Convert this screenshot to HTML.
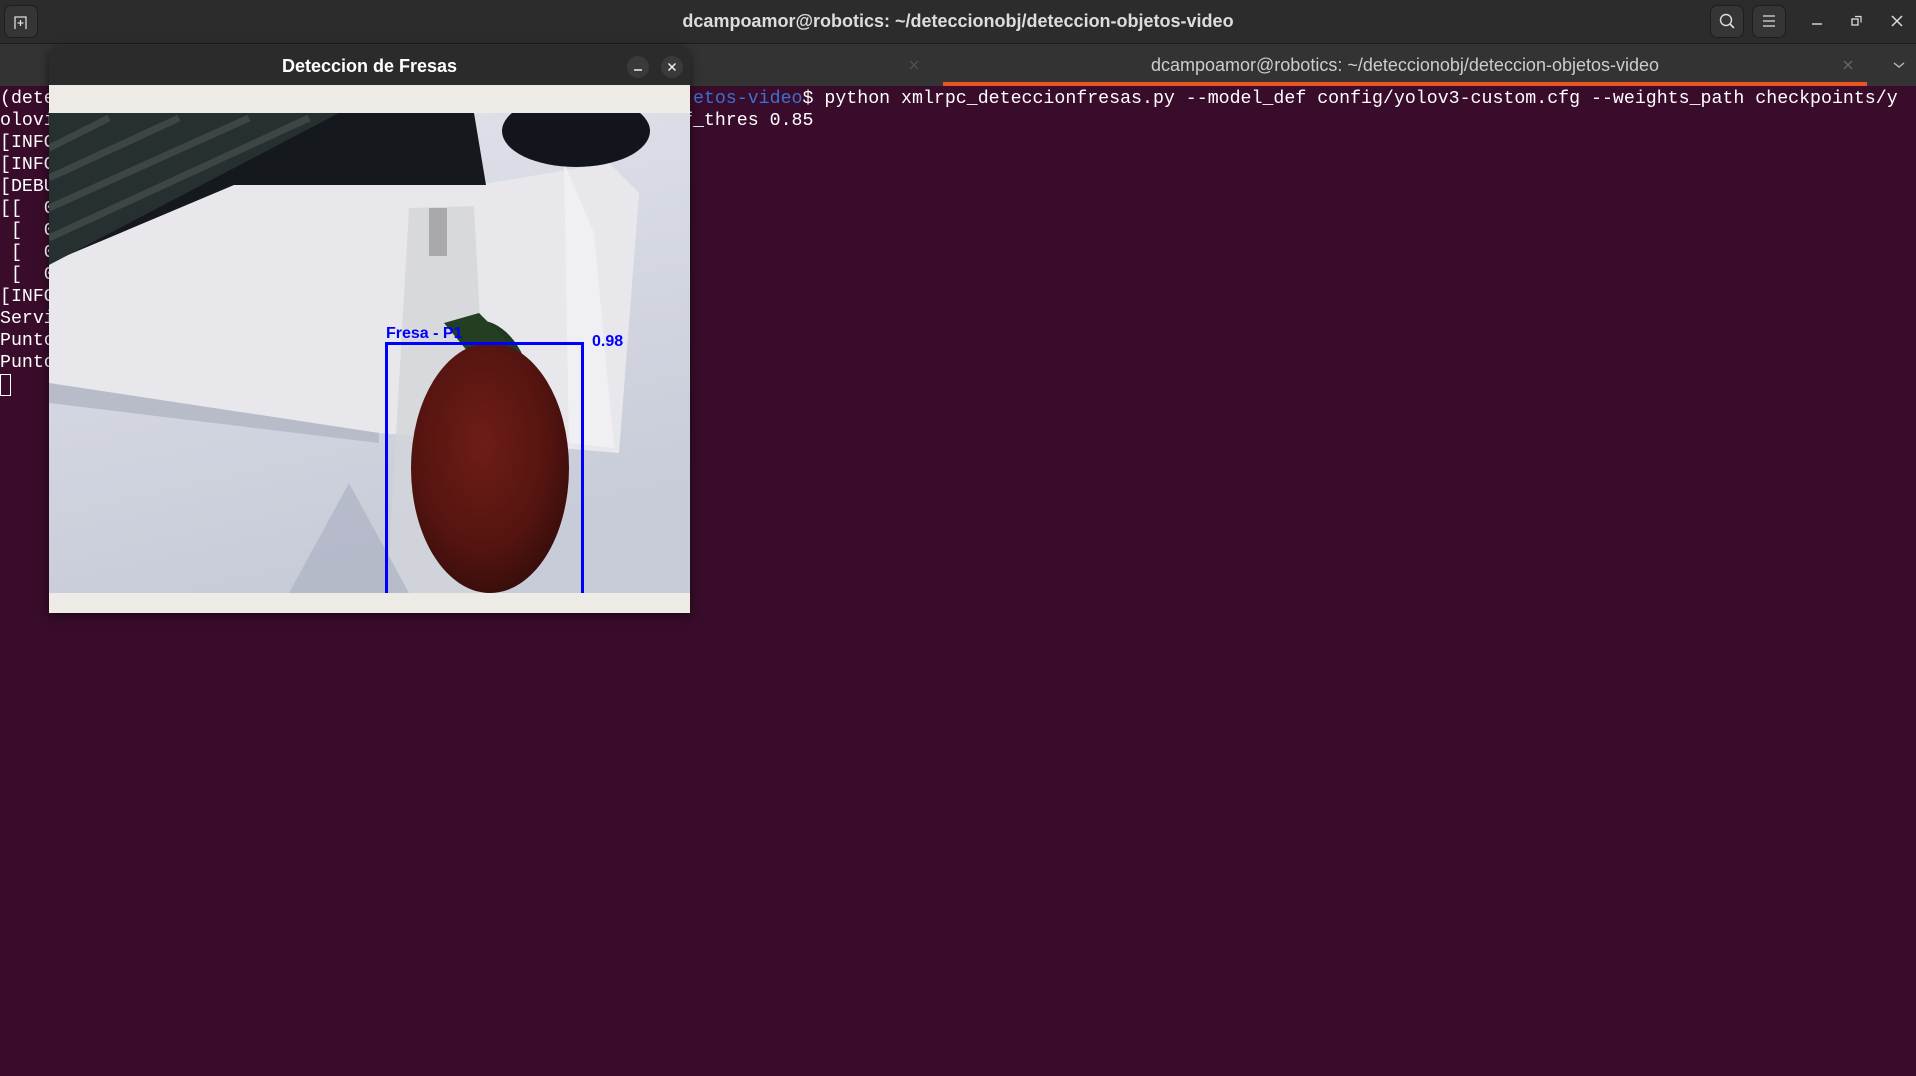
<!DOCTYPE html>
<html><head><meta charset="utf-8"><style>
*{margin:0;padding:0;box-sizing:border-box}
body{width:1916px;height:1076px;overflow:hidden;background:#380c2a;position:relative;font-family:"Liberation Sans",sans-serif}
.hdr{position:absolute;left:0;top:0;width:1916px;height:44px;background:#2c2c2c;border-bottom:1px solid #1c1c1c}
.tabs{position:absolute;left:0;top:44px;width:1916px;height:42px;background:#333}
.orange{position:absolute;left:943px;top:82px;width:924px;height:4px;background:#e95420}
.btn{position:absolute;border:1px solid #1e1e1e;background:#353535;border-radius:7px}
.term{position:absolute;left:0;top:88px;font-family:"Liberation Mono",monospace;font-size:18.25px;line-height:22px;color:#fff;white-space:pre;overflow:hidden;width:1916px;height:320px}
.pop{position:absolute;left:49px;top:47px;width:641px;height:566px;background:#2b2b2b;border-radius:10px 10px 0 0;overflow:hidden;box-shadow:0 2px 10px rgba(0,0,0,.5)}
</style></head><body>
<div class="hdr">
 <div class="btn" style="left:4px;top:5px;width:34px;height:33px"></div>
 <svg style="position:absolute;left:13px;top:14px" width="16" height="16"><path d="M2 15V3h11v12M7.5 6v6M4.5 9h6" stroke="#ddd" stroke-width="1.3" fill="none"/></svg>
 <div style="position:absolute;left:0;width:1916px;top:11px;text-align:center;color:#ddd;font-weight:bold;font-size:18px">dcampoamor@robotics: ~/deteccionobj/deteccion-objetos-video</div>
 <div class="btn" style="left:1710px;top:5px;width:34px;height:33px"></div>
 <svg style="position:absolute;left:1718px;top:12px" width="18" height="18"><circle cx="8" cy="8" r="5.5" stroke="#ddd" stroke-width="1.4" fill="none"/><path d="M12 12l4 4" stroke="#ddd" stroke-width="1.6"/></svg>
 <div class="btn" style="left:1752px;top:5px;width:34px;height:33px"></div>
 <svg style="position:absolute;left:1761px;top:13px" width="16" height="16"><path d="M2 3h12M2 8h12M2 13h12" stroke="#ddd" stroke-width="1.3"/></svg>
 <svg style="position:absolute;left:1811px;top:16px" width="14" height="12"><path d="M1 8h10" stroke="#ddd" stroke-width="1.4"/></svg>
 <svg style="position:absolute;left:1850px;top:14px" width="14" height="14"><rect x="2" y="5" width="6" height="6" stroke="#ddd" fill="none" stroke-width="1.3"/><path d="M5 2.5h6v6" stroke="#ddd" fill="none" stroke-width="1.2"/></svg>
 <svg style="position:absolute;left:1890px;top:14px" width="14" height="14"><path d="M2 2l10 10M12 2L2 12" stroke="#ddd" stroke-width="1.5"/></svg>
</div>
<div class="tabs">
 <svg style="position:absolute;left:908px;top:15px" width="12" height="12"><path d="M2 2l8 8M10 2L2 10" stroke="#555" stroke-width="1.2"/></svg>
 <div style="position:absolute;left:943px;width:924px;top:11px;text-align:center;color:#ccc;font-size:18px">dcampoamor@robotics: ~/deteccionobj/deteccion-objetos-video</div>
 <svg style="position:absolute;left:1842px;top:15px" width="12" height="12"><path d="M2 2l8 8M10 2L2 10" stroke="#666" stroke-width="1.3"/></svg>
 <svg style="position:absolute;left:1892px;top:16px" width="14" height="10"><path d="M2 3l5 4 5-4" stroke="#bbb" stroke-width="1.4" fill="none"/></svg>
</div>
<div class="orange"></div>
<div class="term">(deteccion-objetos-video) dcampoamor@robotics:~/deteccionobj/<span style="color:#3f6fd0">deteccion-objetos-video</span>$ python xmlrpc_deteccionfresas.py --model_def config/yolov3-custom.cfg --weights_path checkpoints/y
olovi3_ckpt_99.pth --class_path data/custom/classes.names --conf_thres 0.85
[INFO] Cargando modelo
[INFO] Modelo cargado
[DEBUG] Matriz
[[  0
 [  0
 [  0
 [  0
[INFO] Iniciando
Servidor
Punto
Punto
<span style="display:inline-block;width:11px;height:22px;border:1.5px solid #fff;vertical-align:top"></span></div>
<div class="term" style="left:682px;width:1234px;height:44px;background:#380c2a"> <span style="color:#3f6fd0">etos-video</span>$ python xmlrpc_deteccionfresas.py --model_def config/yolov3-custom.cfg --weights_path checkpoints/y
f_thres 0.85</div>
<div class="pop">
 <div style="position:absolute;left:0;width:641px;top:9px;text-align:center;color:#fff;font-weight:bold;font-size:18px">Deteccion de Fresas</div>
 <div style="position:absolute;left:578px;top:9px;width:22px;height:22px;border-radius:50%;background:#3a3a3a"></div>
 <svg style="position:absolute;left:583px;top:14px" width="12" height="12"><path d="M2 9h8" stroke="#eee" stroke-width="1.4"/></svg>
 <div style="position:absolute;left:612px;top:9px;width:22px;height:22px;border-radius:50%;background:#3a3a3a"></div>
 <svg style="position:absolute;left:617px;top:14px" width="12" height="12"><path d="M2.5 2.5l7 7M9.5 2.5l-7 7" stroke="#eee" stroke-width="1.5"/></svg>
 <div style="position:absolute;left:0;top:38px;width:641px;height:28px;background:#eeebe6"></div>
 <svg style="position:absolute;left:0;top:66px" width="641" height="480" viewBox="0 0 641 480">
  <defs>
   <linearGradient id="bg" x1="0" y1="0" x2="0.3" y2="1"><stop offset="0" stop-color="#e2e4ec"/><stop offset="1" stop-color="#c8ccd8"/></linearGradient>
   <radialGradient id="sb" cx="0.45" cy="0.4" r="0.6"><stop offset="0" stop-color="#6e1d16"/><stop offset="0.7" stop-color="#551410"/><stop offset="1" stop-color="#3a0e0c"/></radialGradient>
  </defs>
  <rect width="641" height="480" fill="url(#bg)"/>
  <path d="M0 150 L180 70 L440 70 L560 50 L590 80 L570 340 L330 320 L0 270Z" fill="#e8e8ec"/>
  <path d="M0 270 L330 320 L330 330 L0 290Z" fill="#b8bcc8"/>
  <path d="M515 50 L545 120 L565 335 L520 330Z" fill="#f0f0f4"/>
  <path d="M0 0 L425 0 L437 72 L185 72 L0 150Z" fill="#15181c"/>
  <path d="M0 0 L290 0 L0 152Z" fill="#263030"/>
  <path d="M0 125 L260 5 M0 95 L200 5 M0 65 L130 5 M0 35 L60 5" stroke="#3e4645" stroke-width="7"/>
  <ellipse cx="527" cy="18" rx="74" ry="36" fill="#12161c"/>
  <path d="M360 95 L425 93 L445 480 L338 480Z" fill="#d2d4da" opacity="0.8"/>
  <rect x="380" y="95" width="18" height="48" fill="#a9a9ab"/>
  <path d="M300 370 L360 480 L240 480Z" fill="#a9aec0" opacity="0.6"/>
  <path d="M420 210 C440 200 470 220 480 260 L470 300 L440 250Z" fill="#1f3a1e"/>
  <path d="M395 210 L430 200 L460 230 L420 240Z" fill="#233e20"/>
  <ellipse cx="441" cy="355" rx="79" ry="125" fill="url(#sb)"/>
  <rect x="337.5" y="230.5" width="196" height="260" fill="none" stroke="#0000ff" stroke-width="3"/>
  <text x="337" y="225" fill="#0000ff" font-family="Liberation Sans,sans-serif" font-size="16" font-weight="bold">Fresa - P1</text>
  <text x="543" y="233" fill="#0000ff" font-family="Liberation Sans,sans-serif" font-size="16" font-weight="bold">0.98</text>
 </svg>
 <div style="position:absolute;left:0;top:546px;width:641px;height:20px;background:#eeebe6"></div>
</div>
</body></html>
